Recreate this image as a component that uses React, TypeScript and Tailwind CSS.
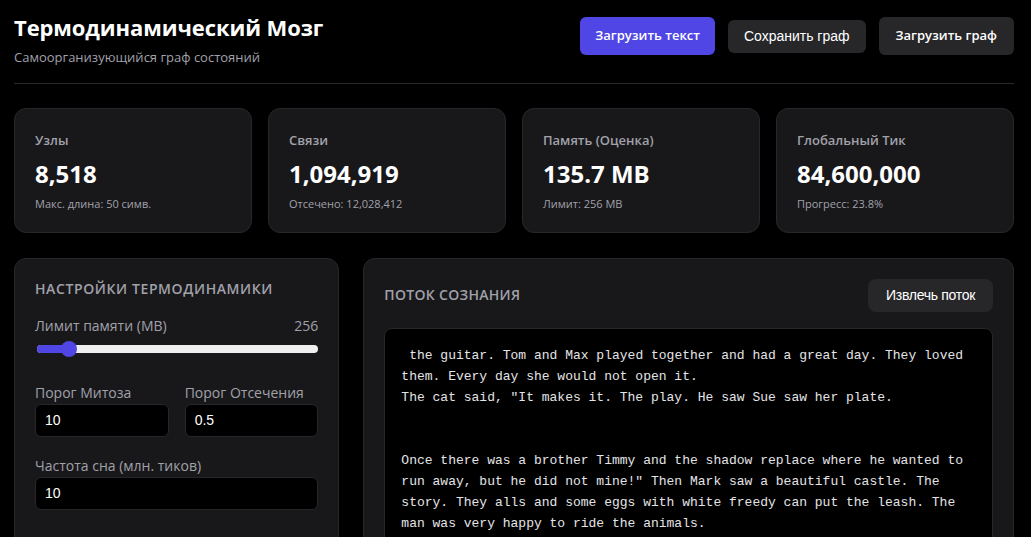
import React from "react";

const stats = [
	{ label: "Узлы", value: "8,518", sub: "Макс. длина: 50 симв." },
	{ label: "Связи", value: "1,094,919", sub: "Отсечено: 12,028,412" },
	{ label: "Память (Оценка)", value: "135.7 MB", sub: "Лимит: 256 MB" },
	{ label: "Глобальный Тик", value: "84,600,000", sub: "Прогресс: 23.8%" },
];

const stream =
	' the guitar. Tom and Max played together and had a great day. They loved them. Every day she would not open it.\nThe cat said, "It makes it. The play. He saw Sue saw her plate.\n\n\nOnce there was a brother Timmy and the shadow replace where he wanted to run away, but he did not mine!" Then Mark saw a beautiful castle. The story. They alls and some eggs with white freedy can put the leash. The man was very happy to ride the animals.';

// простой ползунок без нативного input
const Slider = ({ value, min, max }: { value: number; min: number; max: number }) => {
	const pct = (value - min) / (max - min);
	return (
		<div className="relative h-4 mt-[5px]">
			<div className="absolute left-[2px] right-0 top-1 h-2 rounded-full bg-[#efefef]" />
			<div
				className="absolute left-[2px] top-1 h-2 rounded-full bg-[#5046e5]"
				style={{ width: `calc(${pct * 100}% + 8px)` }}
			/>
			<div
				className="absolute top-0 w-4 h-4 rounded-full bg-[#5046e5]"
				style={{ left: `calc(${pct} * (100% - 16px))` }}
			/>
		</div>
	);
};

const Field = ({ label, value }: { label: string; value: string }) => (
	<div className="flex flex-col">
		<label className="text-sm text-[#a1a1aa] leading-5 mb-[1px]">{label}</label>
		<input
			readOnly
			value={value}
			className="h-[33px] rounded-md bg-black border border-[#27272a] px-[9px] text-sm text-white outline-none font-['Liberation_Sans',sans-serif]"
		/>
	</div>
);

const App = () => {
	return (
		<div className="min-h-[537px] bg-black text-white pl-[14px] pr-[17px] font-['Open_Sans',sans-serif]">
			<header className="flex items-start justify-between pt-[17px] pb-[15px] border-b border-[#2a2a2d]">
				<div>
					<h1 className="text-[22px] leading-6 font-bold tracking-[-0.1px] -mt-[2px]">
						Термодинамический Мозг
					</h1>
					<p className="text-[13px] text-[#a1a1aa] mt-[9px]">
						Самоорганизующийся граф состояний
					</p>
				</div>
				<div className="flex items-center gap-[13px]">
					<button className="h-[38px] px-[15px] rounded-md bg-[#4f46e5] text-[13px] font-semibold text-white">
						Загрузить текст
					</button>
					<button className="h-[33px] px-4 rounded-md bg-[#27272a] text-sm text-white font-['Liberation_Sans',sans-serif]">
						Сохранить граф
					</button>
					<button className="h-[38px] px-[17px] rounded-md bg-[#27272a] text-[13px] font-semibold text-white">
						Загрузить граф
					</button>
				</div>
			</header>

			<div className="grid grid-cols-4 gap-4 mt-6">
				{stats.map((s) => (
					<div
						key={s.label}
						className="rounded-xl bg-[#18181b] border border-[#27272a] p-5"
					>
						<div className="text-[13px] leading-5 font-semibold text-[#a1a1aa] mt-[1px]">
							{s.label}
						</div>
						<div className="text-2xl leading-8 font-bold mt-2">{s.value}</div>
						<div className="text-[11px] leading-4 text-[#a1a1aa] mt-1.5">{s.sub}</div>
					</div>
				))}
			</div>

			<div className="grid grid-cols-[minmax(0,1fr)_minmax(0,2fr)] gap-6 mt-[25px]">
				<div className="rounded-xl bg-[#18181b] border border-[#27272a] p-5 h-[300px]">
					<h2 className="text-sm leading-5 font-semibold uppercase tracking-[0.6px] text-[#a1a1aa]">
						Настройки термодинамики
					</h2>
					<div className="flex justify-between text-sm leading-5 text-[#a1a1aa] mt-[17px]">
						<span>Лимит памяти (MB)</span>
						<span>256</span>
					</div>
					<Slider value={256} min={64} max={2048} />
					<div className="grid grid-cols-2 gap-4 mt-[26px]">
						<Field label="Порог Митоза" value="10" />
						<Field label="Порог Отсечения" value="0.5" />
					</div>
					<div className="mt-[19px]">
						<Field label="Частота сна (млн. тиков)" value="10" />
					</div>
				</div>

				<div className="rounded-xl bg-[#18181b] border border-[#27272a] p-5 h-[300px]">
					<div className="flex items-center justify-between">
						<h2 className="text-sm leading-5 font-semibold uppercase tracking-[0.3px] text-[#a1a1aa]">
							Поток сознания
						</h2>
						<button className="h-[33px] px-[18px] rounded-lg bg-[#27272a] text-sm text-white font-['Liberation_Sans',sans-serif] tracking-[-0.3px]">
							Извлечь поток
						</button>
					</div>
					<div className="mt-4 rounded-lg bg-black border border-[#27272a] px-4 pt-4 pb-4 h-[220px] overflow-hidden">
						<pre className="whitespace-pre-wrap text-[13px] leading-[21px] text-[#e4e4e7] font-['Liberation_Mono',monospace]">
							{stream}
						</pre>
					</div>
				</div>
			</div>
		</div>
	);
};

export default App;
